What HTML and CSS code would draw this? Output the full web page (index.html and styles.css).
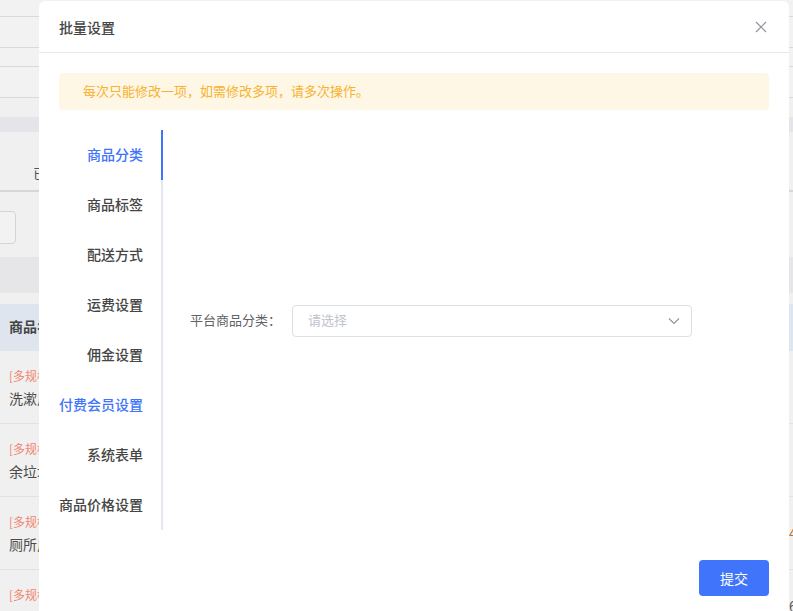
FILE: index.html
```html
<!DOCTYPE html>
<html lang="zh-CN">
<head>
<meta charset="utf-8">
<title>批量设置</title>
<link rel="stylesheet" href="styles.css">
</head>
<body>
<div class="page">
  <div class="bar-row r1"></div>
  <div class="bar-row r2"></div>
  <div class="bar-row r3"></div>
  <div class="bar-row r4"></div>
  <div class="gap g1"></div>
  <div class="band b1"></div>
  <div class="tabs-row"><span class="tab-text">已上架的商品</span></div>
  <div class="search-row"><div class="search-box"></div></div>
  <div class="band b2"></div>
  <div class="table-head"><span>商品名称</span></div>
  <div class="trow"><div class="cell"><div class="tag">[多规格]</div><div class="name">洗漱用品</div></div><div class="rcell"></div></div>
  <div class="trow"><div class="cell"><div class="tag">[多规格]</div><div class="name">余垃圾袋</div></div><div class="rcell"></div></div>
  <div class="trow"><div class="cell"><div class="tag">[多规格]</div><div class="name">厕所用品</div></div><div class="rcell price">4</div></div>
  <div class="trow"><div class="cell"><div class="tag">[多规格]</div><div class="name">厨房用品</div></div><div class="rcell">6</div></div>
</div>

<div class="dialog">
  <div class="dialog-header">
    <span class="dialog-title">批量设置</span>
    <svg class="close" width="12" height="12" viewBox="0 0 12 12"><path d="M1 1 L11 11 M11 1 L1 11" stroke="#909399" stroke-width="1.2" fill="none"/></svg>
  </div>
  <div class="dialog-body">
    <div class="alert">每次只能修改一项，如需修改多项，请多次操作。</div>
    <div class="tabs">
      <div class="tab-nav">
        <div class="tab-item active">商品分类</div>
        <div class="tab-item">商品标签</div>
        <div class="tab-item">配送方式</div>
        <div class="tab-item">运费设置</div>
        <div class="tab-item">佣金设置</div>
        <div class="tab-item hover">付费会员设置</div>
        <div class="tab-item">系统表单</div>
        <div class="tab-item">商品价格设置</div>
      </div>
      <div class="tab-pane">
        <div class="form-item">
          <label class="form-label">平台商品分类：</label>
          <div class="select">
            <span class="placeholder">请选择</span>
            <svg width="12" height="8" viewBox="0 0 12 8"><path d="M1 1.5 L6 6.5 L11 1.5" stroke="#909399" stroke-width="1.1" fill="none"/></svg>
          </div>
        </div>
      </div>
    </div>
    <div class="footer"><button class="btn">提交</button></div>
  </div>
</div>
</body>
</html>
```
FILE: styles.css
```css
* { box-sizing: border-box; }
html, body { margin: 0; padding: 0; }
body {
  width: 793px;
  height: 611px;
  overflow: hidden;
  position: relative;
  font-family: "Noto Sans CJK SC", "Noto Sans", sans-serif;
  background: #f0f0f0;
}
.page { width: 793px; height: 611px; overflow: hidden; background: #f0f0f0; }
.bar-row { border-bottom: 1px solid #d9d9de; background: #f2f2f2; }
.r1 { height: 17px; }
.r2 { height: 31px; }
.r3 { height: 19px; }
.r4 { height: 31px; }
.g1 { height: 19px; }
.band { background: #e5e5e9; }
.b1 { height: 15px; }
.tabs-row {
  height: 60px;
  border-bottom: 2px solid #d6d6da;
  padding: 30px 0 0 33px;
  font-size: 14px;
  line-height: 22px;
  color: #555;
  white-space: nowrap;
}
.search-row { height: 65px; padding-top: 19px; }
.search-box {
  margin-left: -40px;
  width: 56px;
  height: 33px;
  border: 1px solid #d3d5dc;
  border-radius: 4px;
  background: #f2f2f2;
}
.b2 { height: 36px; background: #e6e6e8; margin-bottom: 11px; }
.table-head {
  height: 47px;
  background: #dfe5ef;
  padding-left: 9px;
  font-size: 14px;
  font-weight: 700;
  color: #444;
  line-height: 45px;
  white-space: nowrap;
}
.trow {
  height: 73px;
  border-bottom: 1px solid #e2e2e4;
  display: flex;
  align-items: center;
}
.cell { padding-left: 9px; align-self: flex-start; padding-top: 17px; white-space: nowrap; }
.tag { font-size: 12px; line-height: 16px; color: #f0846f; }
.name { font-size: 14px; line-height: 20px; margin-top: 4px; color: #4a4a4a; }
.rcell { margin-left: auto; width: 4px; font-size: 14px; color: #555; white-space: nowrap; }
.rcell.price { color: #b97532; }

.dialog {
  position: absolute;
  left: 39px;
  top: 1px;
  width: 750px;
  height: 640px;
  background: #fff;
  border-radius: 6px;
}
.dialog-header {
  height: 52px;
  border-bottom: 1px solid #e8e8ec;
  display: flex;
  align-items: center;
  justify-content: space-between;
  padding: 0 22px 0 20px;
}
.dialog-title { font-size: 14px; font-weight: 500; color: #454545; }
.close { display: block; margin-top: 1px; }
.dialog-body { padding: 20px 20px 0 20px; }
.alert {
  height: 37px;
  background: #fef7e6;
  border-radius: 4px;
  padding-left: 24px;
  font-size: 13px;
  line-height: 36px;
  color: #f7b22e;
}
.tabs { display: flex; margin-top: 20px; height: 400px; }
.tab-nav {
  width: 104px;
  border-right: 2px solid #e4e7ed;
  position: relative;
}
.tab-item {
  height: 50px;
  line-height: 48px;
  text-align: right;
  padding-right: 18px;
  font-size: 14px;
  font-weight: 500;
  color: #454545;
  white-space: nowrap;
}
.tab-item.active, .tab-item.hover { color: #4074fa; }
.tab-item.active { position: relative; }
.tab-item.active::after {
  content: "";
  position: absolute;
  right: -2px;
  top: 0;
  width: 2px;
  height: 50px;
  background: #4074fa;
}
.tab-pane { flex: 1; padding-top: 175px; }
.form-item { display: flex; align-items: center; }
.form-label {
  width: 129px;
  text-align: right;
  padding-right: 11px;
  font-size: 13px;
  line-height: 18px;
  padding-bottom: 2px;
  color: #606266;
  white-space: nowrap;
}
.select {
  width: 400px;
  height: 32px;
  border: 1px solid #dcdfe6;
  border-radius: 4px;
  display: flex;
  align-items: center;
  justify-content: space-between;
  padding: 0 11px 0 15px;
}
.placeholder { font-size: 13px; line-height: 18px; padding-bottom: 2px; color: #c0c4cc; }
.select svg { display: block; }
.footer { display: flex; justify-content: flex-end; margin-top: 30px; }
.btn {
  width: 70px;
  height: 36px;
  border: none;
  border-radius: 4px;
  background: #4074fa;
  color: #fff;
  font-family: inherit;
  font-size: 14px;
  padding: 0;
}
```
